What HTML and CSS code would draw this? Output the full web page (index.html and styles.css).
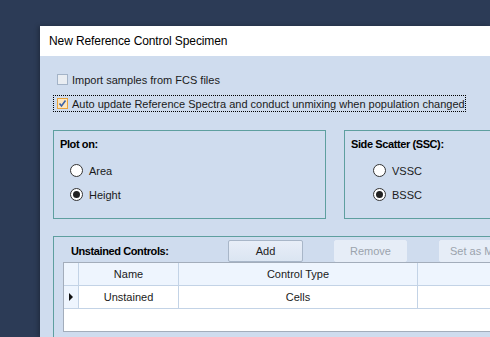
FILE: index.html
```html
<!DOCTYPE html>
<html lang="en">
<head>
    <meta charset="UTF-8" />
    <title>New Reference Control Specimen</title>
    <link rel="stylesheet" href="styles.css">
</head>
<body>
    <div class="dialog">
        <div class="titlebar">New Reference Control Specimen</div>

        <div class="content">
            <div class="check-row">
                <span class="checkbox disabled"></span>
                <span>Import samples from FCS files</span>
            </div>
            <div class="check-row focused">
                <span class="checkbox checked">
                    <svg width="9" height="9" viewBox="0 0 9 9"><path d="M1.5 4.5 L3.5 7 L7.5 1.5" fill="none" stroke="#3b62a8" stroke-width="1.6"/></svg>
                </span>
                <span>Auto update Reference Spectra and conduct unmixing when population changed</span>
            </div>

            <div class="groups">
                <div class="group plot">
                    <div class="group-title">Plot on:</div>
                    <div class="radio-row"><span class="radio"></span>Area</div>
                    <div class="radio-row"><span class="radio on"></span>Height</div>
                </div>
                <div class="group ssc">
                    <div class="group-title">Side Scatter (SSC):</div>
                    <div class="radio-row"><span class="radio"></span>VSSC</div>
                    <div class="radio-row"><span class="radio on"></span>BSSC</div>
                </div>
            </div>

            <div class="group controls">
                <div class="toolbar">
                    <div class="group-title">Unstained Controls:</div>
                    <button class="btn add">Add</button>
                    <button class="btn off remove">Remove</button>
                    <button class="btn off setas">Set as Master</button>
                </div>
                <div class="grid">
                    <div class="grid-row head">
                        <div class="cell rowhead"></div>
                        <div class="cell">Name</div>
                        <div class="cell">Control Type</div>
                        <div class="cell"></div>
                    </div>
                    <div class="grid-row">
                        <div class="cell rowhead"><span class="arrow"></span></div>
                        <div class="cell">Unstained</div>
                        <div class="cell">Cells</div>
                        <div class="cell"></div>
                    </div>
                </div>
            </div>
        </div>
    </div>
</body>
</html>
```

FILE: styles.css
```css
body {
    margin: 0;
    height: 337px;
    overflow: hidden;
    background: #2c3b56;
    font-family: 'Liberation Sans', Arial, sans-serif;
    font-size: 11px;
    color: #1a1a1a;
}
.dialog {
    margin: 26px 0 0 40px;
    width: 450px;
    height: 311px;
    overflow: hidden;
    background: #cfdcee;
    box-shadow: -2px 0 4px rgba(0,0,0,0.25);
}
.titlebar {
    height: 30px;
    line-height: 30px;
    background: #fff;
    padding-left: 9px;
    font-size: 12px;
    letter-spacing: -0.1px;
    color: #000;
}
.content {
    padding: 17px 0 0 13px;
}
.check-row {
    display: flex;
    align-items: center;
    gap: 4px;
    height: 13px;
    padding-left: 4px;
    margin-bottom: 10px;
}
.check-row.focused {
    width: 408px;
    height: 15px;
    padding-left: 3px;
    border: 1px dotted #000;
    margin-top: -1px;
}
.checkbox {
    width: 9px;
    height: 9px;
    border: 1px solid #a3b3c7;
    background: #e9edf2;
    display: flex;
    align-items: center;
    justify-content: center;
    flex: none;
}
.checkbox.checked {
    border-color: #e8a33d;
    background: #fde6bd;
}
.groups {
    display: flex;
    gap: 18px;
    margin-top: 18px;
}
.group {
    border: 1px solid #5e9f9f;
    box-sizing: border-box;
}
.plot {
    width: 273px;
    height: 89px;
    padding: 7px 6px 0 6px;
    flex: none;
}
.ssc {
    width: 160px;
    height: 89px;
    padding: 7px 6px 0 6px;
    flex: none;
}
.group-title {
    font-weight: bold;
    letter-spacing: -0.4px;
    color: #000;
}
.radio-row {
    display: flex;
    align-items: center;
    gap: 6px;
    height: 13px;
    margin-top: 11px;
    padding-left: 10px;
}
.group-title + .radio-row {
    margin-top: 14px;
}
.ssc .radio-row {
    padding-left: 22px;
}
.radio {
    width: 11px;
    height: 11px;
    border: 1px solid #333;
    border-radius: 50%;
    background: #fff;
    display: flex;
    align-items: center;
    justify-content: center;
}
.radio.on::after {
    content: '';
    width: 7px;
    height: 7px;
    border-radius: 50%;
    background: #222;
}
.controls {
    width: 470px;
    height: 120px;
    margin-top: 17px;
    padding: 2px 0 0 9px;
    border-right: none;
}
.toolbar {
    display: flex;
    align-items: center;
    height: 23px;
}
.toolbar .group-title {
    width: 157px;
    padding-left: 8px;
    flex: none;
}
.btn {
    font-family: inherit;
    font-size: 11px;
    height: 22px;
    padding: 0;
    border: 1px solid #a8b6c8;
    border-radius: 2px;
    background: linear-gradient(#e8eef8, #dbe5f2);
    color: #222;
    flex: none;
}
.add {
    width: 75px;
}
.off {
    border-color: #e6edf7;
    background: #e6edf7;
    color: #9ba3ad;
}
.remove {
    width: 73px;
    margin-left: 31px;
}
.setas {
    width: 90px;
    margin-left: 32px;
    text-align: left;
    padding-left: 10px;
}
.grid {
    width: 440px;
    height: 70px;
    background: #fff;
    border: 1px solid #a3adbb;
    box-sizing: border-box;
}
.grid-row {
    display: grid;
    grid-template-columns: 15px 100px 239px 1fr;
    height: 23px;
    border-bottom: 1px solid #c3d3e6;
    box-sizing: border-box;
}
.grid-row.head {
    background: #eef5fe;
}
.cell {
    display: flex;
    align-items: center;
    justify-content: center;
    border-right: 1px solid #c3d3e6;
    color: #1a1a1a;
}
.rowhead {
    background: #eef5fe;
}
.arrow {
    width: 0;
    height: 0;
    border-top: 4px solid transparent;
    border-bottom: 4px solid transparent;
    border-left: 4px solid #111;
}
```
